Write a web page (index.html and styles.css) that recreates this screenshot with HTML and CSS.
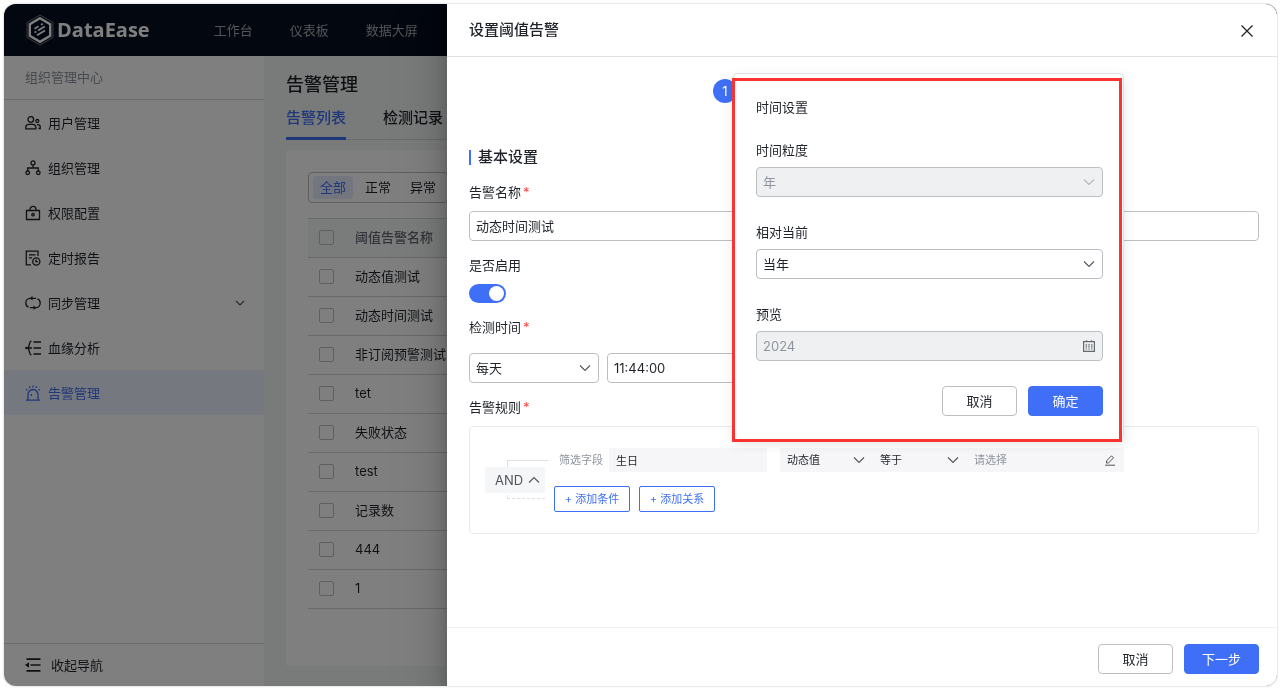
FILE: index.html
```html
<!DOCTYPE html>
<html lang="zh-CN">
<head>
<meta charset="utf-8">
<title>DataEase - 告警管理</title>
<link rel="stylesheet" href="styles.css">
</head>
<body>
<div class="app">
  <header class="topbar">
    <a class="brand" href="#">
      <svg class="brand-mark" viewBox="0 0 28 32" aria-hidden="true">
        <path d="M14 1 27 8.500v15L14 31 1 23.500v-15z" fill="none" stroke="#8b8f96" stroke-width=".8"/>
        <path d="M14 4.200 24.200 10.100v11.800L14 27.800 3.800 21.900V10.100z" fill="none" stroke="#fff" stroke-width="2.400"/>
        <path d="M8.500 14.700l4-2.400M15 10.800l1.800-1.100M8.500 18.600l1.800-1.100M12 16.500l6.800-4.100M11 21.200l8-4.800" stroke="#fff" stroke-width="1.700" fill="none"/>
      </svg>
      <span class="brand-name">DataEase</span>
    </a>
    <nav class="topnav">
      <a href="#">工作台</a>
      <a href="#">仪表板</a>
      <a href="#">数据大屏</a>
    </nav>
  </header>

  <div class="workspace">
    <aside class="sidebar">
      <div class="sidebar-title">组织管理中心</div>
      <nav class="menu">
        <a class="menu-item" href="#">
          <svg class="icon" viewBox="0 0 16 16"><circle cx="5.800" cy="4.500" r="2.800"/><path d="M.8 13.800v-1.500c0-1.900 1.400-3 3-3h4c1.600 0 3 1.100 3 3v1.500z"/><circle cx="12.300" cy="6" r="1.500"/><path d="M12 9.600h.8c1.500 0 2.400.9 2.400 2.200v1.700h-1.800"/></svg>
          用户管理
        </a>
        <a class="menu-item" href="#">
          <svg class="icon" viewBox="0 0 16 16"><circle cx="8" cy="2.900" r="2"/><circle cx="2.700" cy="12.800" r="1.800"/><circle cx="13.300" cy="12.800" r="1.800"/><path d="M8 5v3M2.700 11V8h10.600v3"/></svg>
          组织管理
        </a>
        <a class="menu-item" href="#">
          <svg class="icon" viewBox="0 0 16 16"><path d="M1.500 5.500h13v9h-13zM5 5.500V4.300a3 3 0 0 1 6 0v1.200"/><circle cx="8" cy="9.700" r="1.200"/></svg>
          权限配置
        </a>
        <a class="menu-item" href="#">
          <svg class="icon" viewBox="0 0 16 16"><path d="M13 6V1.200H1.300v13.600H6M4 4.800h6.500M4 7.800h3"/><circle cx="11.300" cy="11.500" r="3.600"/><path d="M11 9.600v2.100h2"/></svg>
          定时报告
        </a>
        <a class="menu-item" href="#">
          <svg class="icon" viewBox="0 0 16 16"><path d="M3.500 12.200C1.800 11.500.8 9.900.8 8c0-2.700 1.800-4.700 4.200-4.700h6M12.500 3.800c1.700.7 2.700 2.300 2.700 4.200 0 2.700-1.800 4.700-4.200 4.700H5"/><path class="solid" d="M7.500 1 4.800 3.300 7.500 5.600zM8.500 10.400v4.600l2.700-2.300z"/></svg>
          同步管理
          <svg class="icon chevron menu-arrow" viewBox="0 0 12 12"><path d="M2 4l4 4 4-4"/></svg>
        </a>
        <a class="menu-item" href="#">
          <svg class="icon" viewBox="0 0 16 16"><path d="M6.500 1 5.300 1.500 3.200 8l2.100 6.500 1.200.5M2 8h5"/><circle class="solid" cx="1.400" cy="8" r="1.300"/><path class="thick" d="M8.500 2H16M8.500 8H16M8.500 14H16"/></svg>
          血缘分析
        </a>
        <a class="menu-item active" href="#">
          <svg class="icon" viewBox="0 0 16 16"><path d="M1 15.200h14M3 15V9.500a5 5 0 0 1 10 0V15M6.200 9v2M8 .5v2M4.200 1.300l.9 1.500M11.800 1.300l-.9 1.500M1 4.300l1.500.9M15 4.300l-1.500.9"/></svg>
          告警管理
        </a>
      </nav>
      <button class="collapse" type="button">
        <svg class="icon" viewBox="0 0 16 16"><path class="thick" d="M1.500 2.200h14M5.500 8h10M1.500 13.800h14"/><path class="solid" d="M0 8 4 5.200v5.600z"/></svg>
        收起导航
      </button>
    </aside>

    <main class="content">
      <h1 class="page-title">告警管理</h1>
      <div class="tabs">
        <button class="tab active" type="button">告警列表</button>
        <button class="tab" type="button">检测记录</button>
      </div>
      <section class="card">
        <div class="segmented">
          <button class="segment active" type="button">全部</button>
          <button class="segment" type="button">正常</button>
          <button class="segment" type="button">异常</button>
        </div>
        <table class="alerts">
          <thead>
            <tr><th class="check"><input type="checkbox" aria-label="全选"></th><th>阈值告警名称</th></tr>
          </thead>
          <tbody>
            <tr><td class="check"><input type="checkbox" aria-label="动态值测试"></td><td>动态值测试</td></tr>
            <tr><td class="check"><input type="checkbox" aria-label="动态时间测试"></td><td>动态时间测试</td></tr>
            <tr><td class="check"><input type="checkbox" aria-label="非订阅预警测试"></td><td>非订阅预警测试</td></tr>
            <tr><td class="check"><input type="checkbox" aria-label="tet"></td><td>tet</td></tr>
            <tr><td class="check"><input type="checkbox" aria-label="失败状态"></td><td>失败状态</td></tr>
            <tr><td class="check"><input type="checkbox" aria-label="test"></td><td>test</td></tr>
            <tr><td class="check"><input type="checkbox" aria-label="记录数"></td><td>记录数</td></tr>
            <tr><td class="check"><input type="checkbox" aria-label="444"></td><td>444</td></tr>
            <tr><td class="check"><input type="checkbox" aria-label="1"></td><td>1</td></tr>
          </tbody>
        </table>
      </section>
    </main>
  </div>

  <div class="mask"></div>

  <section class="drawer">
    <header class="drawer-header">
      <h2 class="drawer-title">设置阈值告警</h2>
      <button class="close" type="button" aria-label="关闭">
        <svg class="icon" viewBox="0 0 16 16"><path d="M2.500 2.500l11 11M13.500 2.500l-11 11"/></svg>
      </button>
    </header>

    <form class="drawer-body">
      <div class="steps"><span class="step">1</span></div>
      <h3 class="section-title">基本设置</h3>

      <div class="field">
        <label class="label required" for="name">告警名称</label>
        <input class="control" id="name" type="text" value="动态时间测试">
      </div>
      <div class="field">
        <label class="label" for="enabled">是否启用</label>
        <input class="switch" id="enabled" type="checkbox" role="switch" checked>
      </div>
      <div class="field spaced">
        <label class="label required" for="cycle">检测时间</label>
        <div class="time-row">
          <span class="select-box cycle">
            <select class="control" id="cycle"><option>每天</option></select>
            <svg class="icon chevron" viewBox="0 0 12 12"><path d="M1 3.500l5 5 5-5"/></svg>
          </span>
          <input class="control clock" type="text" value="11:44:00" aria-label="时间">
        </div>
      </div>
      <div class="field">
        <span class="label required">告警规则</span>
        <div class="rules">
          <div class="relation">
            <span class="link-top"></span>
            <button class="and" type="button">AND
              <svg class="icon chevron" viewBox="0 0 12 12"><path d="M1 8.500l5-5 5 5"/></svg>
            </button>
            <span class="link-bottom"></span>
          </div>
          <div class="conditions">
            <div class="condition">
              <label class="hint" for="filter-field">筛选字段</label>
              <input class="cell filter-field" id="filter-field" type="text" value="生日">
              <div class="value-group">
                <span class="select-box">
                  <select class="cell" aria-label="值类型"><option>动态值</option></select>
                  <svg class="icon chevron" viewBox="0 0 12 12"><path d="M1 3.500l5 5 5-5"/></svg>
                </span>
                <span class="select-box">
                  <select class="cell" aria-label="条件"><option>等于</option></select>
                  <svg class="icon chevron" viewBox="0 0 12 12"><path d="M1 3.500l5 5 5-5"/></svg>
                </span>
                <span class="select-box">
                  <input class="cell" type="text" placeholder="请选择" aria-label="动态时间">
                  <svg class="icon pencil" viewBox="0 0 12 12"><path d="M2.500 9V7L7.500 1.800l2 2L4.500 9zM1 11.200h10"/></svg>
                </span>

                <div class="popover" role="dialog" aria-labelledby="time-title">
                  <span class="highlight"></span>
                  <h4 class="popover-title" id="time-title">时间设置</h4>
                  <div class="popover-field">
                    <label class="label" for="grain">时间粒度</label>
                    <span class="select-box">
                      <select class="control" id="grain" disabled><option>年</option></select>
                      <svg class="icon chevron muted" viewBox="0 0 12 12"><path d="M1 3.500l5 5 5-5"/></svg>
                    </span>
                  </div>
                  <div class="popover-field">
                    <label class="label" for="relative">相对当前</label>
                    <span class="select-box">
                      <select class="control" id="relative"><option>当年</option></select>
                      <svg class="icon chevron" viewBox="0 0 12 12"><path d="M1 3.500l5 5 5-5"/></svg>
                    </span>
                  </div>
                  <div class="popover-field">
                    <label class="label" for="preview">预览</label>
                    <span class="select-box">
                      <input class="control" id="preview" type="text" value="2024" disabled>
                      <svg class="icon calendar" viewBox="0 0 12 12"><path d="M.6 1.600h10.800v9.800H.6zM3.500.3v1.500M8.500.3v1.500"/><path stroke-dasharray="1.500 1.200" d="M2.600 4.800h7M2.600 6.900h7M2.600 9h7"/></svg>
                    </span>
                  </div>
                  <div class="actions">
                    <button class="btn" type="button">取消</button>
                    <button class="btn primary" type="button">确定</button>
                  </div>
                </div>
              </div>
            </div>
            <div class="adders">
              <button class="add" type="button">+ 添加条件</button>
              <button class="add" type="button">+ 添加关系</button>
            </div>
          </div>
        </div>
      </div>
    </form>

    <footer class="drawer-footer actions">
      <button class="btn" type="button">取消</button>
      <button class="btn primary" type="button">下一步</button>
    </footer>
  </section>
</div>
</body>
</html>
```

FILE: styles.css
```css
* { box-sizing: border-box; }

:root {
  --ink: #1f2329;
  --muted: #646a73;
  --faint: #8f959e;
  --line: #bbbfc4;
  --soft-line: #e8eaec;
  --blue: #3f6ff6;
  --fill: #f5f6f7;
}

body {
  margin: 0;
  padding: 4px 3px 4px 4px;
  background: #fff;
  color: var(--ink);
  font: 13px/20px Inter, "Noto Sans CJK SC", sans-serif;
  filter: drop-shadow(0 0 1px rgba(0, 0, 0, .22));
}

button, input, select {
  font: inherit;
  color: inherit;
  margin: 0;
}

button { cursor: pointer; }
a { color: inherit; text-decoration: none; }
h1, h2, h3, h4 { margin: 0; font-weight: 500; }

.app {
  position: relative;
  display: flex;
  flex-direction: column;
  min-height: calc(100vh - 8px);
  border-radius: 12px;
  overflow: hidden;
  background: #fff;
}

.icon {
  width: 16px;
  height: 16px;
  flex: none;
  fill: none;
  stroke: currentColor;
  stroke-width: 1.3;
}
.icon .solid { fill: currentColor; stroke: none; }
.icon .thick { stroke-width: 1.7; }
.chevron { width: 12px; height: 12px; stroke-width: 1.1; color: #50555c; }
.chevron.muted { color: #b4b8be; }

/* Top bar */
.topbar {
  display: flex;
  align-items: center;
  gap: 64px;
  height: 52px;
  padding: 0 22px 1px;
  background: #050e21;
  color: #a6a9ae;
}
.brand { display: flex; align-items: center; gap: 3px; color: #fff; }
.brand-mark { width: 28px; height: 32px; }
.brand-name { font: 700 20px/28px "Open Sans", sans-serif; }
.topnav { display: flex; gap: 37px; }

/* Sidebar */
.workspace { display: flex; flex: 1; }
.sidebar {
  display: flex;
  flex-direction: column;
  width: 260px;
  flex: none;
  background: #fff;
}
.sidebar-title {
  height: 44px;
  padding: 11px 21px;
  border-bottom: 1px solid #d5d7da;
  color: var(--faint);
}
.menu { flex: 1; }
.menu-item {
  display: flex;
  align-items: center;
  gap: 7px;
  height: 45px;
  padding: 0 18px 0 21px;
}
.menu-item.active { background: #ebf0ff; color: var(--blue); }
.menu-arrow { margin-left: auto; }
.collapse {
  display: flex;
  align-items: center;
  gap: 10px;
  height: 43px;
  padding: 0 21px;
  border: 0;
  border-top: 1px solid #d5d7da;
  background: none;
}

/* List page */
.content {
  flex: 1;
  display: flex;
  flex-direction: column;
  padding: 16px 22px 20px;
  background: #f3f6f5;
}
.page-title { font-size: 18px; line-height: 26px; }
.tabs {
  display: flex;
  gap: 37px;
  margin-bottom: 10px;
  border-bottom: 1px solid #d5d7da;
}
.tab {
  height: 42px;
  margin-bottom: -1px;
  padding: 0;
  border: 0;
  border-bottom: 3px solid transparent;
  background: none;
  font-size: 15px;
  font-weight: 500;
}
.tab.active { border-color: var(--blue); color: var(--blue); }
.card {
  flex: 1;
  padding: 22px;
  border-radius: 3px;
  background: #fff;
}
.segmented {
  display: inline-flex;
  gap: 5px;
  padding: 3px 4px;
  border: 1px solid var(--line);
  border-radius: 4px;
}
.segment {
  padding: 1px 7px 2px;
  border: 0;
  border-radius: 4px;
  background: none;
}
.segment.active { background: #e6ecff; color: var(--blue); }
.alerts {
  width: 100%;
  margin-top: 15px;
  border-collapse: collapse;
  border-top: 1px solid #d5d7da;
}
.alerts th, .alerts td {
  height: 39px;
  padding: 0 0 2px;
  border-bottom: 1px solid #d0d3d6;
  text-align: left;
  font-weight: 400;
}
.alerts th { background: var(--fill); color: var(--muted); font-weight: 500; }
.alerts .check { width: 47px; padding-left: 11px; }
.check input {
  display: block;
  width: 15px;
  height: 15px;
  appearance: none;
  border: 1px solid var(--line);
  border-radius: 2px;
}

/* Drawer */
.mask {
  position: absolute;
  inset: 0;
  background: rgba(0, 0, 0, .5);
}
.drawer {
  position: absolute;
  inset: 0 0 0 auto;
  width: 65.2%;
  display: flex;
  flex-direction: column;
  background: #fff;
  box-shadow: 0 16px 48px 16px rgba(0, 0, 0, .08), 0 12px 32px rgba(0, 0, 0, .12), 0 8px 16px rgba(0, 0, 0, .16);
}
.drawer-header {
  display: flex;
  align-items: center;
  justify-content: space-between;
  height: 53px;
  padding: 0 22px;
  border-bottom: 1px solid #dee0e3;
}
.drawer-title { font-size: 15px; line-height: 22px; }
.close { display: flex; padding: 2px 0 0; border: 0; background: none; }
.drawer-body { flex: 1; padding: 22px 18px 22px 22px; }
.drawer-footer {
  padding: 16px 18px 12px;
  border-top: 1px solid #eff0f1;
}

.steps { display: flex; padding-left: 244px; }
.step {
  width: 24px;
  height: 24px;
  border-radius: 50%;
  background: var(--blue);
  color: #fff;
  line-height: 24px;
  text-align: center;
}
.section-title {
  display: flex;
  align-items: center;
  gap: 7px;
  margin: 43px 0 14px;
  font-size: 15px;
  line-height: 22px;
}
.section-title::before {
  content: "";
  width: 2px;
  height: 15px;
  background: var(--blue);
}
.field {
  display: flex;
  flex-direction: column;
  gap: 9px;
  margin-bottom: 14px;
}
.field.spaced { gap: 16px; }
.required::after { content: "*"; margin-left: 2px; color: #f54a45; }

.control {
  width: 100%;
  height: 30px;
  padding: 0 6px 1px;
  border: 1px solid var(--line);
  border-radius: 4px;
  background: #fff;
  appearance: none;
}
.control:disabled { background: #eff0f1; color: var(--faint); opacity: 1; }
.select-box { display: grid; align-items: center; }
.select-box > * { grid-area: 1 / 1; }
.select-box > .icon { justify-self: end; margin-right: 8px; pointer-events: none; }
.calendar { width: 12px; height: 12px; color: var(--muted); stroke-width: 1.2; }

.switch {
  display: flex;
  align-items: center;
  justify-content: flex-end;
  width: 37px;
  height: 19px;
  padding: 2px;
  border-radius: 10px;
  background: var(--blue);
  appearance: none;
}
.switch::before {
  content: "";
  width: 15px;
  height: 15px;
  border-radius: 50%;
  background: #fff;
}
.time-row { display: flex; gap: 8px; }
.cycle { width: 130px; }
.clock { width: 150px; }

/* Rule editor */
.rules {
  display: flex;
  gap: 9px;
  padding: 21px 15px;
  border: 1px solid var(--soft-line);
  border-radius: 4px;
}
.relation { width: 60px; padding-top: 12px; }
.link-top, .link-bottom { display: block; margin-left: 22px; }
.link-top {
  width: 41px;
  height: 7px;
  border-top: 1px solid #dee0e3;
  border-left: 1px solid #dee0e3;
}
.link-bottom {
  width: 38px;
  height: 4px;
  margin-top: 2px;
  border-bottom: 1px dashed #dee0e3;
  border-left: 1px solid #dee0e3;
}
.and {
  display: flex;
  align-items: center;
  gap: 5px;
  width: 60px;
  height: 26px;
  padding: 0 0 0 10px;
  border: 0;
  background: var(--fill);
  color: #50555c;
}
.conditions { display: flex; flex-direction: column; gap: 14px; }
.condition { display: flex; align-items: center; padding-left: 5px; font-size: 11px; }
.hint { margin-right: 6px; color: var(--faint); }
.cell {
  width: 100%;
  height: 24px;
  padding: 0 7px;
  border: 0;
  background: #f6f6f8;
  appearance: none;
}
.cell::placeholder { color: var(--faint); opacity: 1; }
.filter-field { width: 158px; margin-right: 13px; }
.value-group {
  position: relative;
  display: grid;
  grid-template-columns: 93px 94px 157px;
}
.select-box > .pencil { width: 12px; height: 12px; stroke-width: 1; color: #50555c; }
.adders { display: flex; gap: 9px; }
.add {
  width: 76px;
  height: 26px;
  padding: 0;
  border: 1px solid var(--blue);
  border-radius: 2px;
  background: #fff;
  color: var(--blue);
  font-size: 11px;
}

/* Dynamic time popover, opened above the value cell */
.popover {
  position: absolute;
  right: 0;
  bottom: calc(100% + 8px);
  z-index: 2;
  width: 391px;
  padding: 23px 20px 23px 22px;
  border: 1px solid #dee0e3;
  border-radius: 4px;
  background: #fff;
  box-shadow: 0 4px 12px rgba(31, 35, 41, .12);
  font-size: 13px;
}
.highlight {
  position: absolute;
  inset: 4px 1px -3px -2px;
  border: 3px solid #fb3232;
  pointer-events: none;
}
.popover-title { font-size: 13px; font-weight: 400; margin-bottom: 23px; }
.popover-field { display: grid; gap: 7px; margin-bottom: 25px; }
.actions { display: flex; justify-content: flex-end; gap: 11px; }
.btn {
  width: 75px;
  height: 30px;
  padding: 0;
  border: 1px solid var(--line);
  border-radius: 4px;
  background: #fff;
}
.btn.primary { border-color: var(--blue); background: var(--blue); color: #fff; }
```
